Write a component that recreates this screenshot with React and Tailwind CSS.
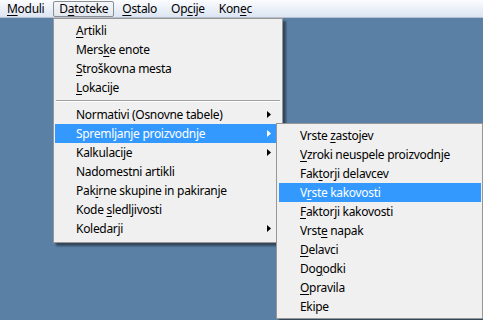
import React from "react";

const font = { fontFamily: '"Noto Sans", "Open Sans", sans-serif' };

// mnemonic: index of the underlined letter, -1 for none
const mainItems = [
  { label: "Artikli", u: 0 },
  { label: "Merske enote", u: 4 },
  { label: "Stroškovna mesta", u: 0 },
  { label: "Lokacije", u: 0 },
  { sep: true },
  { label: "Normativi (Osnovne tabele)", u: -1, sub: true },
  { label: "Spremljanje proizvodnje", u: -1, sub: true, active: true },
  { label: "Kalkulacije", u: -1, sub: true },
  { label: "Nadomestni artikli", u: -1 },
  { label: "Pakirne skupine in pakiranje", u: 3 },
  { label: "Kode sledljivosti", u: 5 },
  { label: "Koledarji", u: -1, sub: true },
];

const subItems = [
  { label: "Vrste zastojev", u: 6 },
  { label: "Vzroki neuspele proizvodnje", u: 0 },
  { label: "Faktorji delavcev", u: 3 },
  { label: "Vrste kakovosti", u: 1, active: true },
  { label: "Faktorji kakovosti", u: 0 },
  { label: "Vrste napak", u: 4 },
  { label: "Delavci", u: 0 },
  { label: "Dogodki", u: 2 },
  { label: "Opravila", u: 0 },
  { label: "Ekipe", u: -1 },
];

function Mn({ text, u }) {
  if (u < 0) return <span>{text}</span>;
  return (
    <span>
      {text.slice(0, u)}
      <span className="underline underline-offset-2">{text[u]}</span>
      {text.slice(u + 1)}
    </span>
  );
}

function Arrow({ white }) {
  return (
    <svg width="4" height="7" viewBox="0 0 4 7" className="shrink-0">
      <path d="M0 0 L4 3.5 L0 7 Z" fill={white ? "#ffffff" : "#000000"} />
    </svg>
  );
}

function MenuRow({ item }) {
  return (
    <div
      className={
        "flex items-center h-[19px] pl-[21px] pr-[10px] " +
        (item.active ? "bg-[#3399ff] text-white" : "text-black")
      }
    >
      <span className="flex-1 whitespace-nowrap">
        <Mn text={item.label} u={item.u} />
      </span>
      {item.sub && <Arrow white={item.active} />}
    </div>
  );
}

export default function App() {
  const bar = [
    { label: "Moduli", u: 0 },
    { label: "Datoteke", u: 1, open: true },
    { label: "Ostalo", u: 0 },
    { label: "Opcije", u: 2 },
    { label: "Konec", u: 3 },
  ];

  return (
    <div
      className="relative w-[483px] h-[320px] overflow-hidden bg-[#5b80a5] text-[12px] leading-none tracking-[-0.3px]"
      style={font}
    >
      {/* menu bar */}
      <div className="flex items-center gap-[2px] pl-[1px] h-[18px] bg-gradient-to-b from-[#fbfcfe] to-[#dce5f3] border-b border-[#b9c0cb]">
        {bar.map((b, i) => (
          <div
            key={b.label}
            className={
              "h-[16px] flex items-center px-[5px] rounded-[2px] border " +
              (i === 0 ? "mr-[1px] " : "") +
              (b.open
                ? "border-[#8a8f96] bg-gradient-to-b from-[#f4f6f9] to-[#e3e8ef]"
                : "border-transparent")
            }
          >
            <Mn text={b.label} u={b.u} />
          </div>
        ))}
      </div>

      {/* Datoteke dropdown */}
      <div className="absolute left-[53px] top-[18px] w-[230px] h-[225px] bg-[#f0f0f0] border border-[#979797] px-[1px] py-[2px] shadow-[3px_3px_2px_rgba(0,0,0,0.45)]">
        {mainItems.map((it, i) =>
          it.sep ? (
            <div key={i} className="h-[8px] flex items-center">
              <div className="w-full mx-[1px] h-[2px] border-t border-[#a0a0a0] border-b border-b-white" />
            </div>
          ) : (
            <MenuRow key={i} item={it} />
          )
        )}
      </div>

      {/* Spremljanje proizvodnje submenu */}
      <div className="absolute left-[276px] top-[123px] w-[207px] h-[196px] bg-[#f0f0f0] border border-[#979797] pl-[2px] pr-[1px] py-[2px] shadow-[3px_3px_2px_rgba(0,0,0,0.45)]">
        {subItems.map((it, i) => (
          <MenuRow key={i} item={it} />
        ))}
      </div>
    </div>
  );
}
